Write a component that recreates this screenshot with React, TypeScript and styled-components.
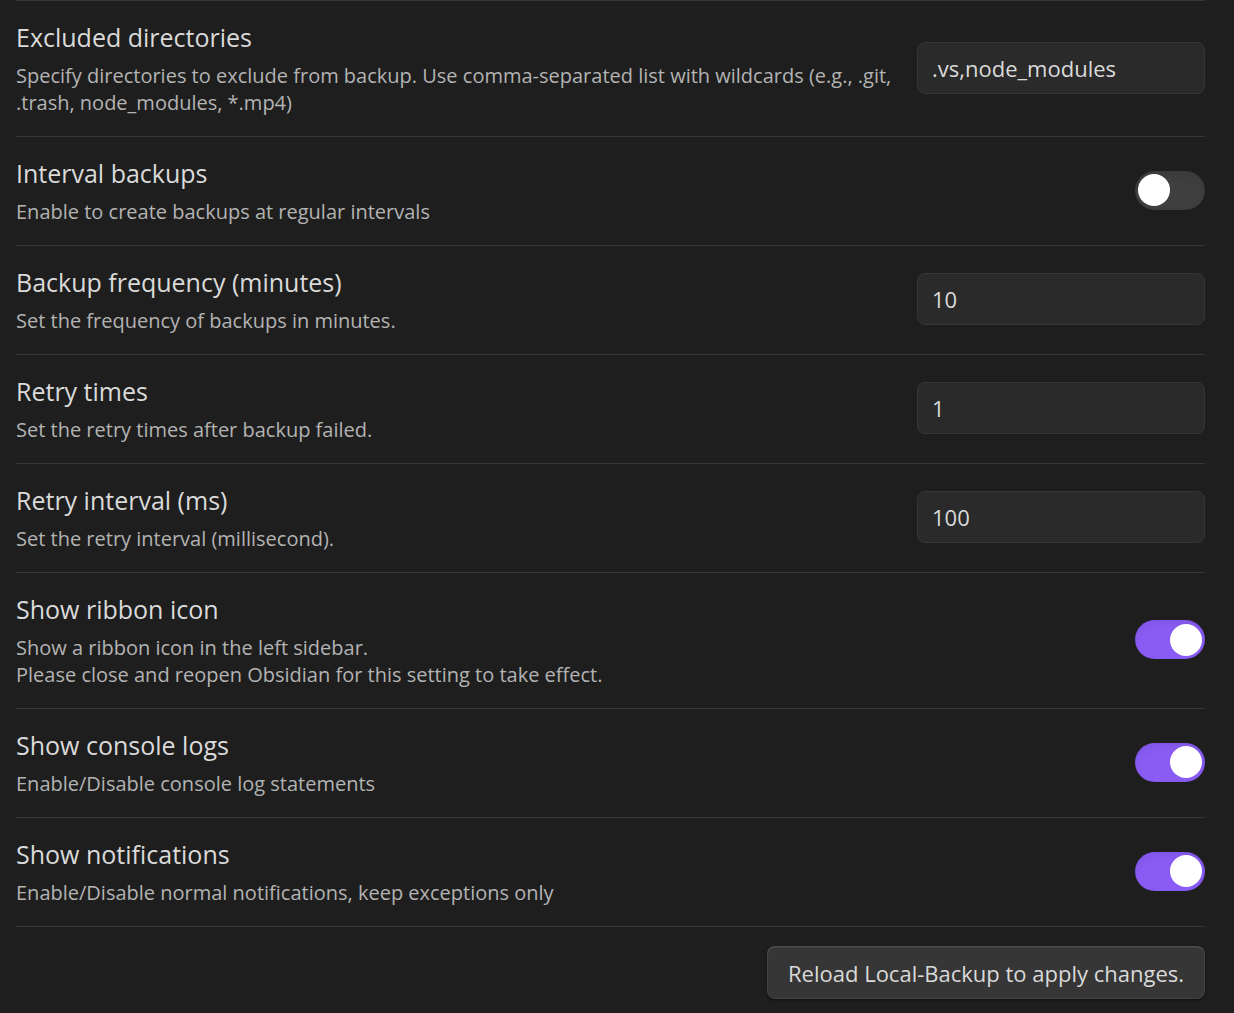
import React, { useId, useState } from "react";
import styled, { createGlobalStyle } from "styled-components";

const GlobalStyle = createGlobalStyle`
  *, *::before, *::after { box-sizing: border-box; }
  html { background: #1e1e1e; }
  body { margin: 0; background: #1e1e1e; color: #dadada; font-family: "Open Sans", "Noto Sans", sans-serif; }
`;

const Page = styled.main`
  padding: 0 29px 0 16px;
`;

const Row = styled.section`
  display: flex;
  align-items: center;
  gap: 24px;
  padding: 18px 0 20px;
  border-top: 1px solid #363636;
`;

const Info = styled.div`
  flex: 1;
  min-width: 0;
`;

const Name = styled.label`
  display: block;
  font-size: 25px;
  line-height: 37px;
`;

const Description = styled.p`
  margin: 6px 0 0;
  font-size: 20px;
  line-height: 27px;
  color: #b3b3b3;
  white-space: pre-line;
`;

const TextInput = styled.input`
  width: 288px;
  height: 52px;
  padding: 4px 14px;
  border: 1px solid #363636;
  border-radius: 8px;
  background: #2a2a2a;
  color: #dadada;
  font: 22px "Open Sans", "Noto Sans", sans-serif;
`;

const Toggle = styled.input`
  appearance: none;
  display: flex;
  align-items: center;
  width: 70px;
  height: 39px;
  margin: 0;
  padding: 0 3px;
  border-radius: 20px;
  background: #3f3f3f;
  box-shadow: inset 0 4px 10px rgba(0, 0, 0, 0.07), inset 0 0 1px rgba(0, 0, 0, 0.21);
  cursor: pointer;
  &::before {
    content: "";
    width: 32px;
    height: 32px;
    border-radius: 50%;
    background: #fff;
  }
  &:checked {
    justify-content: flex-end;
    background: #8a5cf5;
  }
`;

const Footer = styled.footer`
  display: flex;
  justify-content: flex-end;
  padding: 19px 0 14px;
  border-top: 1px solid #363636;
`;

const Button = styled.button`
  height: 53px;
  padding: 0 21px;
  border: 0;
  border-radius: 8px;
  background: #363636;
  color: #dadada;
  box-shadow: inset 0 2px 1px rgba(255, 255, 255, 0.07), inset 0 0 0 1px rgba(255, 255, 255, 0.06),
    0 2px 3px rgba(0, 0, 0, 0.2), 0 1px 2px rgba(0, 0, 0, 0.2);
  font: 22px "Open Sans", "Noto Sans", sans-serif;
  cursor: pointer;
`;

type SettingProps = { name: string; description: string; value?: string; checked?: boolean };

function Setting({ name, description, value, checked = false }: SettingProps) {
  const id = useId();
  const [text, setText] = useState(value ?? "");
  const [on, setOn] = useState(checked);
  return (
    <Row>
      <Info>
        <Name htmlFor={id}>{name}</Name>
        <Description>{description}</Description>
      </Info>
      {value !== undefined ? (
        <TextInput id={id} type="text" value={text} onChange={(e) => setText(e.target.value)} />
      ) : (
        <Toggle id={id} type="checkbox" checked={on} onChange={(e) => setOn(e.target.checked)} />
      )}
    </Row>
  );
}

const settings: SettingProps[] = [
  { name: "Excluded directories", description: "Specify directories to exclude from backup. Use comma-separated list with wildcards (e.g., .git, .trash, node_modules, *.mp4)", value: ".vs,node_modules" },
  { name: "Interval backups", description: "Enable to create backups at regular intervals" },
  { name: "Backup frequency (minutes)", description: "Set the frequency of backups in minutes.", value: "10" },
  { name: "Retry times", description: "Set the retry times after backup failed.", value: "1" },
  { name: "Retry interval (ms)", description: "Set the retry interval (millisecond).", value: "100" },
  { name: "Show ribbon icon", description: "Show a ribbon icon in the left sidebar.\nPlease close and reopen Obsidian for this setting to take effect.", checked: true },
  { name: "Show console logs", description: "Enable/Disable console log statements", checked: true },
  { name: "Show notifications", description: "Enable/Disable normal notifications, keep exceptions only", checked: true },
];

export default function App() {
  return (
    <>
      <GlobalStyle />
      <Page>
        {settings.map((s) => (
          <Setting key={s.name} {...s} />
        ))}
        <Footer>
          <Button type="button">Reload Local-Backup to apply changes.</Button>
        </Footer>
      </Page>
    </>
  );
}
